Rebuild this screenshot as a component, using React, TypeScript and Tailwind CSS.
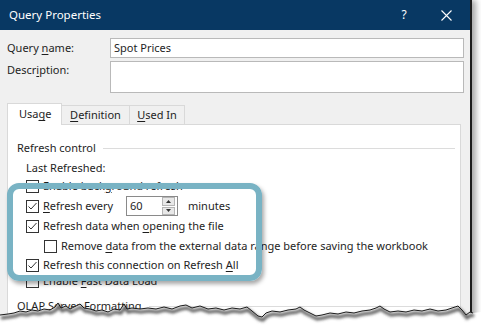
import React from 'react'

const font = { fontFamily: '"Segoe UI", "Noto Sans", sans-serif' }

function Check({ checked = false }: { checked?: boolean }) {
  return (
    <span className="flex-shrink-0 w-[13px] h-[13px] border border-[#333333] bg-white flex items-center justify-center">
      {checked && (
        <svg width="11" height="11" viewBox="0 0 11 11">
          <polyline points="1.5,5.5 4,8 9.5,2" fill="none" stroke="#333333" strokeWidth="1" />
        </svg>
      )}
    </span>
  )
}

function U({ children }: { children: React.ReactNode }) {
  return <span className="underline underline-offset-2">{children}</span>
}

const edge: [number, number][] = [
  [0, 315], [8, 314], [14, 313], [20, 311], [26, 312], [32, 310], [38, 311], [44, 309], [50, 310],
  [55, 307], [58, 303], [61, 308], [66, 306], [70, 309], [76, 306], [80, 304], [84, 308], [90, 309],
  [96, 311], [102, 310], [108, 312], [114, 309], [120, 310], [124, 304], [127, 309], [132, 308],
  [140, 309], [148, 308], [156, 309], [164, 307], [172, 309], [180, 306], [186, 305], [192, 308],
  [200, 306], [208, 309], [216, 308], [224, 310], [232, 308], [240, 309], [247, 307], [252, 311],
  [258, 316], [262, 317], [266, 313], [272, 311], [280, 312], [288, 310], [296, 309], [300, 307],
  [304, 310], [310, 313], [316, 316], [322, 315], [330, 313], [338, 314], [346, 312], [354, 313],
  [362, 311], [370, 310], [376, 308], [380, 306], [384, 309], [390, 312], [398, 311], [406, 312],
  [414, 310], [422, 311], [430, 309], [438, 311], [446, 310], [452, 308], [458, 306], [462, 310],
  [466, 315], [470, 312], [473, 313],
]

function TornEdge() {
  const line = edge.map(([x, y]) => `${x},${y}`).join(' ')
  const fill = `${line} 481,312 481,326 0,326`
  return (
    <svg className="absolute left-0 top-[290px]" width="481" height="36" viewBox="0 290 481 36">
      <defs>
        <filter id="blur" x="-5%" y="-50%" width="110%" height="200%">
          <feGaussianBlur stdDeviation="1.6" />
        </filter>
      </defs>
      <polygon points={fill} fill="#ffffff" />
      <polyline points={line} fill="none" stroke="#555555" strokeWidth="3" filter="url(#blur)" transform="translate(1,3)" />
      <polyline points={line} fill="none" stroke="#1a1a1a" strokeWidth="1" />
    </svg>
  )
}

export default function App() {
  return (
    <div className="relative w-[481px] h-[326px] bg-white overflow-hidden text-[11px] text-[#1e1e1e] whitespace-nowrap" style={font}>
      <div className="w-[472px] h-[326px] bg-[#f0f0f0] border-r-2 border-[#1c1c1c] shadow-[4px_0_6px_rgba(0,0,0,0.35)] flex flex-col">
        {/* title bar */}
        <div className="h-[30px] bg-[#083863] flex items-center text-white text-[11.5px]">
          <span className="pl-[9px] flex-1">Query Properties</span>
          <span className="w-[20px] text-center mr-[27px] text-[12px]">?</span>
          <svg width="11" height="11" viewBox="0 0 11 11" className="mr-[18px]">
            <path d="M0.5 0.5 L10.5 10.5 M10.5 0.5 L0.5 10.5" stroke="#ffffff" strokeWidth="1.1" />
          </svg>
        </div>

        {/* fields */}
        <div className="pl-[7px] pr-[6px] pt-[8px]">
          <div className="flex items-center h-[20px]">
            <span className="w-[103px]">Query <U>n</U>ame:</span>
            <div className="flex-1 h-[20px] bg-white border border-[#b9b9b9] flex items-center pl-[3px]">Spot Prices</div>
          </div>
          <div className="flex mt-[3px]">
            <span className="w-[103px] leading-[16px] pt-[1px]">Descr<U>i</U>ption:</span>
            <div className="flex-1 h-[32px] bg-white border border-[#b9b9b9]" />
          </div>
        </div>

        {/* tabs */}
        <div className="pl-[7px] pr-[9px] mt-[9px] flex items-end h-[22px]">
          <div className="w-[55px] h-[22px] bg-white border border-b-0 border-[#d9d9d9] flex items-center pl-[11px] relative z-10 mb-[-1px]">
            Usa<U>g</U>e
          </div>
          <div className="w-[68px] h-[19px] border border-l-0 border-b-0 border-[#d9d9d9] flex items-center justify-center">
            <U>D</U>efinition
          </div>
          <div className="w-[55px] h-[19px] border border-l-0 border-b-0 border-[#d9d9d9] flex items-center justify-center">
            <U>U</U>sed In
          </div>
        </div>

        {/* tab panel */}
        <div className="relative ml-[7px] mr-[9px] flex-1 bg-white border border-[#d9d9d9] pt-[15px]">
          <div className="flex items-center h-[16px] pl-[9px] pr-[5px]">
            <span>Refresh control</span>
            <span className="flex-1 ml-[7px] h-px bg-[#dcdcdc]" />
          </div>
          <div className="h-[16px] mt-[4px] pl-[18px] flex items-center">Last Refreshed:</div>

          <div className="h-[20px] pl-[18px] flex items-center gap-[4px]">
            <Check />
            <span>Enable back<U>g</U>round refresh</span>
          </div>
          <div className="h-[20px] pl-[18px] flex items-center">
            <Check checked />
            <span className="ml-[4px] w-[83px]"><U>R</U>efresh every</span>
            <div className="w-[52px] h-[20px] border border-[#8a8a8a] bg-white flex items-center">
              <span className="flex-1 pl-[3px]">60</span>
              <div className="w-[13px] h-[18px] mr-[2px] flex flex-col gap-px">
                <div className="flex-1 bg-[#e8e8e8] border border-[#b5b5b5] flex items-center justify-center">
                  <svg width="5" height="3" viewBox="0 0 5 3"><polygon points="2.5,0 5,3 0,3" fill="#333333" /></svg>
                </div>
                <div className="flex-1 bg-[#e8e8e8] border border-[#b5b5b5] flex items-center justify-center">
                  <svg width="5" height="3" viewBox="0 0 5 3"><polygon points="0,0 5,0 2.5,3" fill="#333333" /></svg>
                </div>
              </div>
            </div>
            <span className="ml-[10px]">minutes</span>
          </div>
          <div className="h-[21px] pl-[18px] flex items-center gap-[4px]">
            <Check checked />
            <span>Refresh data when <U>o</U>pening the file</span>
          </div>
          <div className="h-[19px] pl-[36px] flex items-center gap-[4px]">
            <Check />
            <span>Remove <U>d</U>ata from the external data range before saving the workbook</span>
          </div>
          <div className="h-[19px] pl-[18px] flex items-center gap-[4px]">
            <Check checked />
            <span>Refresh this connection on Refresh <U>A</U>ll</span>
          </div>
          <div className="h-[12px] pl-[18px] flex items-center gap-[4px]">
            <Check />
            <span>Enable <U>F</U>ast Data Load</span>
          </div>
          <div className="flex items-center h-[18px] mt-[10px] pl-[9px] pr-[5px]">
            <span>OLAP Server Formatting</span>
            <span className="flex-1 ml-[7px] h-px bg-[#dcdcdc]" />
          </div>

          {/* highlight annotation */}
          <div className="absolute left-[-1px] top-[58px] w-[255px] h-[98px] rounded-[12px] border-[6px] border-[#79b3c4] shadow-[2px_3px_4px_rgba(0,0,0,0.35)]" />
        </div>
      </div>
      <TornEdge />
    </div>
  )
}
